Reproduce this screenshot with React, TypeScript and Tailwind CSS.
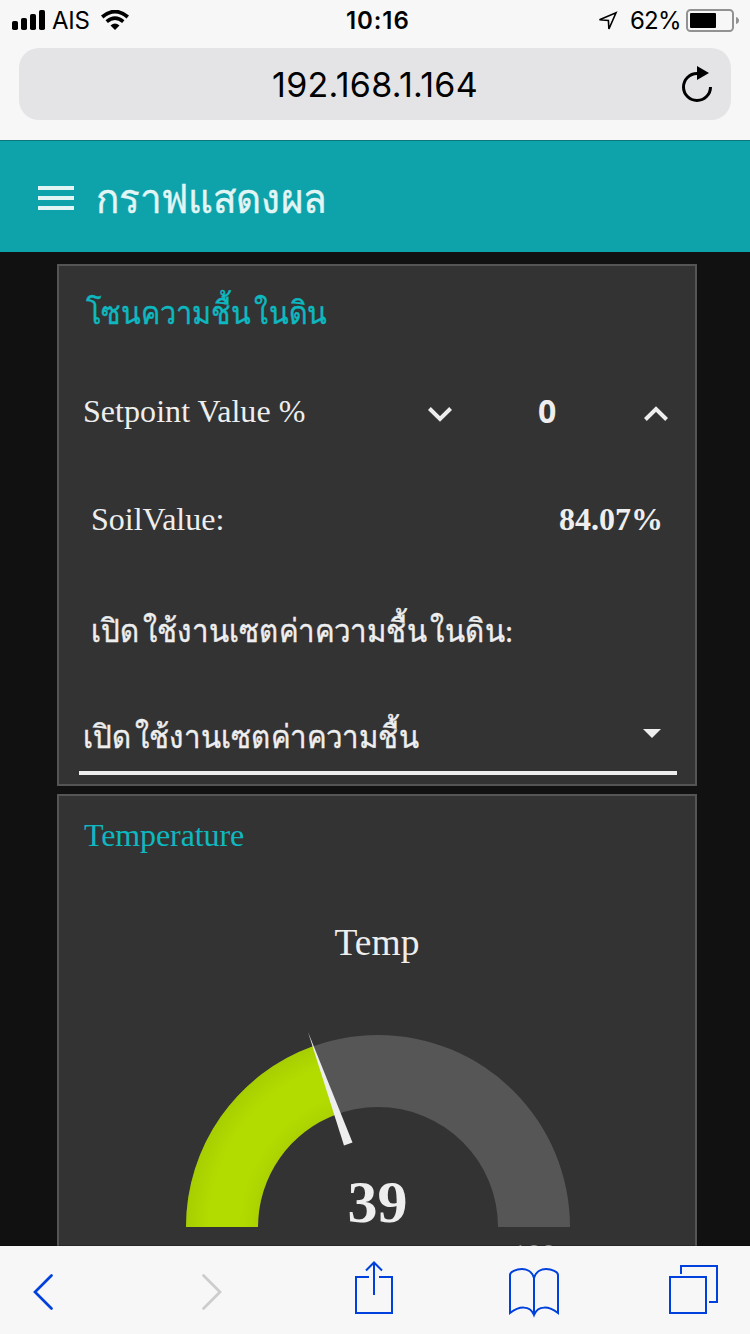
import React from "react";

const VALUE = 39;
const CX = 378;
const CY = 192;
const OUTER = 192;
const INNER = 120;

function polar(radius: number, percent: number): string {
  const angle = Math.PI * (1 - percent / 100);
  return `${CX + radius * Math.cos(angle)} ${CY - radius * Math.sin(angle)}`;
}

function arc(from: number, to: number): string {
  return `M${polar(OUTER, from)}A${OUTER} ${OUTER} 0 0 1 ${polar(OUTER, to)}L${polar(INNER, to)}A${INNER} ${INNER} 0 0 0 ${polar(INNER, from)}Z`;
}

function StatusBar() {
  return (
    <div className="flex h-10 items-center text-black">
      <svg className="ml-3 h-5 w-[33px]" viewBox="0 0 33 20">
        <rect x="0" y="11" width="6" height="9" rx="1.8" />
        <rect x="9" y="8" width="6" height="12" rx="1.8" />
        <rect x="18" y="4" width="6" height="16" rx="1.8" />
        <rect x="27" y="0" width="6" height="20" rx="1.8" />
      </svg>
      <span className="ml-[7px] mt-[2px] w-[49px] whitespace-nowrap text-[24px] leading-10 tracking-[-0.2px]">AIS</span>
      <svg className="h-5 w-7" viewBox="0 0 28 20" fill="none" stroke="black">
        <path d="M1.2 7Q14-3.8 26.800 7" strokeWidth="3.800" />
        <path d="M5.700 11.600Q14 4.800 22.300 11.600" strokeWidth="3.700" />
        <path d="M9.500 15.600Q14 11.600 18.500 15.600L14 20Z" fill="black" stroke="none" />
      </svg>
      <span className="ml-[217px] mt-[2px] w-[253px] whitespace-nowrap text-[24px] font-semibold leading-10 tracking-[0.9px]">10:16</span>
      <svg className="-ml-px mt-[2px] h-5 w-5" viewBox="0 0 20 20" fill="none" stroke="black" strokeWidth="1.600">
        <path d="M1.500 8.800L18 1.700L10.900 18L10.400 9.400Z" strokeLinejoin="miter" />
      </svg>
      <span className="ml-[12px] mt-[2px] w-[56px] whitespace-nowrap text-[24px] leading-10 tracking-[-0.8px]">62%</span>
      <svg className="mt-px h-[23px] w-[53px]" viewBox="0 0 53 23">
        <rect x="1" y="1" width="46" height="21" rx="3.500" fill="none" stroke="#929292" strokeWidth="2" />
        <rect x="4" y="4" width="26" height="15" rx="1" />
        <path d="M50 8Q53 9 53 11.500Q53 14 50 15Z" fill="#929292" />
      </svg>
    </div>
  );
}

function BrowserTop() {
  return (
    <div className="h-[140px] shrink-0 bg-[#f7f7f7]">
      <StatusBar />
      <div className="mx-[19px] mt-2 flex h-[72px] items-center rounded-[20px] bg-[#e4e4e6] text-black">
        <span className="ml-[253px] mt-px w-[409px] whitespace-nowrap text-[34px] leading-[72px] tracking-[0.3px]">192.168.1.164</span>
        <svg className="h-9 w-8" viewBox="0 0 32 36">
          <path d="M16 7.500A13.500 13.500 0 1 0 29.500 21" fill="none" stroke="black" strokeWidth="3" />
          <path d="M16 0L28 7L16 14Z" />
        </svg>
      </div>
    </div>
  );
}

function SoilCard() {
  return (
    <section className="h-[522px] shrink-0 border-2 border-[#555] bg-[#333] font-['Liberation_Serif',serif] text-[32px] leading-10 text-[#eee]">
      <h2 className="ml-[27px] mt-[27px] h-10 origin-left scale-x-[0.9] whitespace-nowrap text-[#0eb8c0] [-webkit-text-stroke:0.4px]">
        โซนความชื้น<span className="ml-1">ในดิน</span>
      </h2>
      <div className="mt-[58px] flex h-10 items-center">
        <span className="ml-6 w-[345px] whitespace-nowrap tracking-[0.05px]">Setpoint Value %</span>
        <svg className="mt-[6px] h-4 w-6" viewBox="0 0 24 16" fill="none" stroke="#eee" strokeWidth="4">
          <path d="M1.400 2.500L12 13L22.600 2.500" />
        </svg>
        <span className="ml-[86px] w-[106px] font-['Open_Sans',sans-serif] text-[32px] font-bold">0</span>
        <svg className="mt-[6px] h-4 w-6" viewBox="0 0 24 16" fill="none" stroke="#eee" strokeWidth="4">
          <path d="M1.400 13.500L12 3L22.600 13.500" />
        </svg>
      </div>
      <div className="mt-[68px] flex h-10 items-center justify-between pl-8 pr-[32px]">
        <span>SoilValue:</span>
        <b>84.07%</b>
      </div>
      <p className="ml-8 mt-[72px] h-10 origin-left scale-x-[0.92] whitespace-nowrap [-webkit-text-stroke:0.4px]">
        เปิด<span className="ml-1">ใช้งานเซตค่าความชื้น</span><span className="ml-1">ในดิน:</span>
      </p>
      <div className="ml-5 mr-[18px] mt-[66px] flex h-[58px] justify-between border-b-4 border-[#eee] pl-1 pr-4">
        <span className="origin-left scale-x-[0.92] whitespace-nowrap [-webkit-text-stroke:0.4px]">
          เปิด<span className="ml-1">ใช้งานเซตค่าความชื้น</span>
        </span>
        <svg className="mt-3 h-[9px] w-[18px]" viewBox="0 0 18 9" fill="#eee"><path d="M0 0H18L9 9Z" /></svg>
      </div>
    </section>
  );
}

function TemperatureCard() {
  return (
    <section className="mt-2 h-[600px] shrink-0 border-2 border-[#555] bg-[#333] font-['Liberation_Serif',serif] text-[#eee]">
      <h2 className="ml-[25px] mt-[19px] h-10 text-[32px] leading-10 tracking-[-0.1px] text-[#0eb8c0]">Temperature</h2>
      <h3 className="mt-[66px] h-11 text-center text-[37.5px] leading-[44px]">Temp</h3>
      <svg className="-ml-[59px] mt-[70px] block h-[240px] w-[750px] overflow-visible" viewBox="0 0 750 240">
        <defs>
          <radialGradient id="value" gradientUnits="userSpaceOnUse" cx={CX} cy={CY} r={OUTER}>
            <stop offset="0.625" stopColor="#abd200" />
            <stop offset="0.72" stopColor="#b2dc00" />
            <stop offset="0.88" stopColor="#b2dc00" />
            <stop offset="1" stopColor="#a7ce00" />
          </radialGradient>
        </defs>
        <path d={arc(0, 100)} fill="#565656" />
        <path d={arc(0, VALUE)} fill="url(#value)" />
        <path d="M308 -3L352.500 107.500L344 110.500Z" fill="#eee" />
        <text x="377.500" y="187" textAnchor="middle" fill="#eee" fontSize="60" fontWeight="700">{VALUE}</text>
        <text x="534" y="229" textAnchor="middle" fill="#b3b3b3" fontSize="29">100</text>
      </svg>
    </section>
  );
}

function BrowserBottom() {
  return (
    <nav className="z-10 -mt-px flex h-[89px] shrink-0 border-t border-black/20 bg-[#f7f7f7] bg-clip-padding">
      <svg className="h-[88px] w-[750px]" viewBox="0 1246 750 88" fill="none" stroke="#0040dd" strokeWidth="2">
        <path d="M51.500 1275.500L35 1292L51.500 1308.500" strokeWidth="2.700" strokeLinecap="round" />
        <path d="M203.500 1275.500L220 1292L203.500 1308.500" stroke="#ccc" strokeWidth="2.700" strokeLinecap="round" />
        <path d="M369 1277H356V1313H392V1277H379M374 1295V1262.500M366 1270.500L374 1262.500L382 1270.500" />
        <path d="M534 1278C532 1271 526 1269 522 1269C516 1269 510 1272 510 1275V1313C519 1306 530 1305 534 1315C538 1305 549 1306 558 1313V1275C558 1272 552 1269 546 1269C542 1269 536 1271 534 1278V1314" />
        <path d="M670 1277H706V1313H670ZM681 1274V1266H717V1302H709" />
      </svg>
    </nav>
  );
}

export default function App() {
  return (
    <div className="flex h-[1334px] w-[750px] flex-col overflow-hidden bg-[#111] font-['Inter',sans-serif]">
      <BrowserTop />
      <header className="flex h-28 shrink-0 items-center border-t border-[#0a777c] bg-[#0ea3ab] text-[#e2f5f5]">
        <svg className="ml-[38px] mt-[2px] h-6 w-9" viewBox="0 0 36 24" fill="currentColor">
          <path d="M0 0H36V4H0ZM0 10H36V14H0ZM0 20H36V24H0Z" />
        </svg>
        <h1 className="ml-[22px] mt-[6px] origin-left scale-x-[0.967] whitespace-nowrap font-['Liberation_Serif',serif] text-[40px] leading-[56px] [-webkit-text-stroke:0.4px]">กราฟแสดงผล</h1>
      </header>
      <main className="-mb-px flex min-h-0 flex-1 flex-col overflow-hidden pl-[57px] pr-[53px] pt-3">
        <SoilCard />
        <TemperatureCard />
      </main>
      <BrowserBottom />
    </div>
  );
}
